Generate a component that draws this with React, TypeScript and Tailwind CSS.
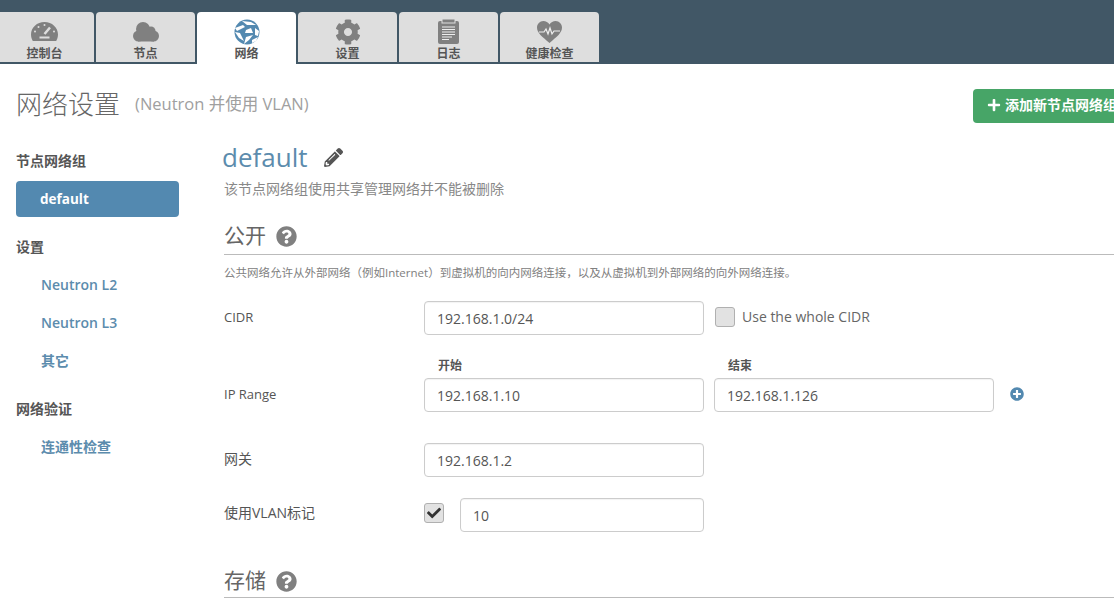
import React from "react";
import { FaCog, FaQuestionCircle, FaPencilAlt, FaPlus, FaCheck, FaPlusCircle } from "react-icons/fa";

const F = "font-['Open_Sans','Noto_Sans_CJK_SC',sans-serif]";

const Gauge = () => (
  <svg width="27" height="19" viewBox="0 0 27 19" fill="#808080">
    <path d="M13.500 0C6 0 0 5.500 0 12.500c0 2.400.7 4.600 1.800 6.500h23.400c1.100-1.900 1.800-4.100 1.800-6.500C27 5.500 21 0 13.500 0z" />
    <path d="M19 5.500l-5.500 6.500" stroke="#dedede" strokeWidth="2.500" />
    <path d="M8.500 15.500h10" stroke="#dedede" strokeWidth="2" />
    <circle cx="13.500" cy="3" r="1" fill="#dedede" />
    <circle cx="7.500" cy="5" r="1" fill="#dedede" />
    <circle cx="4" cy="9.500" r="1" fill="#dedede" />
    <circle cx="23" cy="9.500" r="1" fill="#dedede" />
  </svg>
);

const Cloud = () => (
  <svg width="26" height="20" viewBox="0 0 26 20" fill="#808080">
    <circle cx="10" cy="7" r="7" />
    <circle cx="18" cy="9" r="4.500" />
    <circle cx="5.500" cy="14" r="5.500" />
    <circle cx="20.500" cy="14" r="5.500" />
    <rect x="5" y="10" width="16" height="9.500" />
  </svg>
);

const Globe = () => (
  <svg width="26" height="26" viewBox="0 0 26 26">
    <circle cx="13" cy="13" r="12.500" fill="#5389b0" />
    <g fill="#fff">
      <path d="M1 9l8-3 2 2-8 4z" />
      <path d="M12 11l5-2 2 5-8 0z" />
      <path d="M8 2l9 1 5 3-9 0z" />
      <path d="M1 13l5 1 4 8-5-3z" />
      <path d="M12 18l7-2-4 5-5 4z" />
      <path d="M21 9l4 3-1 5-3-1z" />
      <path d="M18 21l6-3-2 4-4 2z" />
    </g>
  </svg>
);

const Clip = () => (
  <svg width="21" height="25" viewBox="0 0 21 25">
    <rect x="0" y="2" width="21" height="23" rx="2" fill="#808080" />
    <rect x="4" y="0" width="13" height="4" fill="#808080" stroke="#dedede" strokeWidth="1" />
    <path d="M4 8h13M4 10.500h13M4 13h13M4 15.500h13M4 18h10M4 20.500h7" stroke="#eeeeee" strokeWidth="1.200" />
  </svg>
);

const Heart = () => (
  <svg width="25" height="22" viewBox="0 0 25 22">
    <path d="M12.500 22C5 15.500 0 12 0 6.500 0 3 2.800 0 6.300 0c2.600 0 4.900 1.400 6.200 3.500C13.800 1.400 16.100 0 18.700 0 22.200 0 25 3 25 6.500 25 12 20 15.500 12.500 22z" fill="#808080" />
    <path d="M2 11h5l2-3 2 5 2-6 2 6 2-3h6" fill="none" stroke="#eeeeee" strokeWidth="1.200" />
  </svg>
);

const tabs = [
  { label: "控制台", icon: <Gauge />, cls: "ml-[-5px]" },
  { label: "节点", icon: <Cloud />, cls: "" },
  { label: "网络", icon: <Globe />, cls: "", active: true },
  { label: "设置", icon: <FaCog size={26} color="#808080" />, cls: "" },
  { label: "日志", icon: <Clip />, cls: "" },
  { label: "健康检查", icon: <Heart />, cls: "" },
];

const Input = ({ value, w = "w-[280px]" }: { value: string; w?: string }) => (
  <div className={`${w} h-[34px] shrink-0 rounded-[4px] border border-[#cccccc] bg-white pl-3 flex items-center text-[14px] text-[#555555] shadow-[inset_0_1px_1px_rgba(0,0,0,0.05)]`}>
    {value}
  </div>
);

const Check = ({ checked }: { checked?: boolean }) => (
  <div className="w-5 h-5 shrink-0 rounded-[3px] border border-[#b0b0b0] bg-[#e2e2e2] flex items-center justify-center">
    {checked && <FaCheck size={14} color="#333333" />}
  </div>
);

const SideHead = ({ children, className = "" }: { children: React.ReactNode; className?: string }) => (
  <div className={`h-[20px] flex items-center text-[14px] font-semibold text-[#555555] ${className}`}>{children}</div>
);

const SideLink = ({ children, className = "" }: { children: React.ReactNode; className?: string }) => (
  <div className={`h-[20px] pl-[25px] flex items-center text-[14px] font-semibold text-[#5c8cad] ${className}`}>{children}</div>
);

const Section = ({ title, className = "" }: { title: string; className?: string }) => (
  <div className={`w-[900px] border-b border-[#bbbbbb] flex items-start gap-[10px] ${className}`}>
    <span className="text-[21px] leading-[28px] text-[#666666] -mt-[1px]">{title}</span>
    <FaQuestionCircle size={21} color="#808080" className="mt-[4px]" />
  </div>
);

export default function App() {
  return (
    <div className={`w-[1114px] h-[601px] overflow-hidden bg-white ${F}`}>
      <div className="h-[64px] bg-[#415766] pt-[12px] flex items-start gap-[2px]">
        {tabs.map((t) => (
          <div
            key={t.label}
            className={`${t.cls} w-[99px] shrink-0 rounded-t-[4px] flex flex-col items-center ${t.active ? "bg-white h-[52px]" : "bg-[#dedede] h-[50px]"}`}
          >
            <div className="h-[29px] mt-[5px] flex items-center justify-center">{t.icon}</div>
            <div className="text-[12px] leading-[14px] mt-[1px] font-semibold text-[#555555]">{t.label}</div>
          </div>
        ))}
      </div>

      <div className="h-[66px] pl-4 pt-[14px] flex items-center relative">
        <span className="text-[26px] text-[#666666] font-light">网络设置</span>
        <span className="ml-[15px] text-[16.500px] text-[#a0a0a0] mt-[1px]">(Neutron 并使用 VLAN)</span>
        <div className="absolute left-[973px] top-[25px] w-[170px] h-[34px] bg-[#47a567] rounded-[4px] flex items-center pl-[14px] pb-[3px] gap-[4px] text-white text-[14px] font-bold whitespace-nowrap">
          <FaPlus size={14} />
          添加新节点网络组
        </div>
      </div>

      <div className="flex">
        <div className="w-[208px] pl-4 shrink-0 pt-[20px]">
          <SideHead>节点网络组</SideHead>
          <div className="w-[163px] h-[36px] mt-[11px] rounded-[4px] bg-[#5389b0] pl-[24px] flex items-center text-[13.500px] font-bold text-white">default</div>
          <SideHead className="mt-[19px]">设置</SideHead>
          <SideLink className="mt-[18px]">Neutron L2</SideLink>
          <SideLink className="mt-[18px]">Neutron L3</SideLink>
          <SideLink className="mt-[18px]">其它</SideLink>
          <SideHead className="mt-[28px]">网络验证</SideHead>
          <SideLink className="mt-[18px]">连通性检查</SideLink>
        </div>

        <div className="pl-[16px] flex-1">
          <div className="flex items-center ml-[-2px] h-[40px] mt-[7px]">
            <span className="text-[26px] text-[#5c8cad]">default</span>
            <FaPencilAlt size={19} color="#555555" className="ml-[17px]" />
          </div>
          <div className="text-[14px] leading-[18px] text-[#888888] mt-[3px]">该节点网络组使用共享管理网络并不能被删除</div>

          <Section title="公开" className="mt-[24px] h-[33px]" />
          <div className="text-[11.500px] leading-[16px] text-[#808080] mt-[10px] whitespace-nowrap">公共网络允许从外部网络（例如Internet）到虚拟机的向内网络连接，以及从虚拟机到外部网络的向外网络连接。</div>

          <div className="flex items-center mt-[20px] h-[34px]">
            <div className="w-[200px] text-[13px] text-[#555555]">CIDR</div>
            <Input value="192.168.1.0/24" />
            <div className="ml-[11px] -mt-[2px]"><Check /></div>
            <span className="ml-[7px] text-[14px] text-[#666666] -mt-[3px]">Use the whole CIDR</span>
          </div>

          <div className="flex items-start mt-[22px] pl-[214px] text-[12px] font-semibold text-[#555555] h-[20px]">
            <div className="w-[290px]">开始</div>
            <div>结束</div>
          </div>
          <div className="flex items-center h-[34px] mt-[1px]">
            <div className="w-[200px] text-[13px] text-[#555555]">IP Range</div>
            <Input value="192.168.1.10" />
            <div className="ml-[10px]"><Input value="192.168.1.126" /></div>
            <FaPlusCircle size={14} color="#5389b0" className="ml-[16px] -mt-[2px]" />
          </div>

          <div className="flex items-center mt-[31px] h-[34px]">
            <div className="w-[200px] text-[14px] text-[#555555] -mt-[4px]">网关</div>
            <Input value="192.168.1.2" />
          </div>

          <div className="flex items-center mt-[21px] h-[34px]">
            <div className="w-[200px] text-[14px] text-[#555555] -mt-[6px]">使用VLAN标记</div>
            <div className="-mt-[5px]"><Check checked /></div>
            <div className="ml-[16px]"><Input value="10" w="w-[244px]" /></div>
          </div>

          <Section title="存储" className="mt-[35px] h-[31px]" />
        </div>
      </div>
    </div>
  );
}
